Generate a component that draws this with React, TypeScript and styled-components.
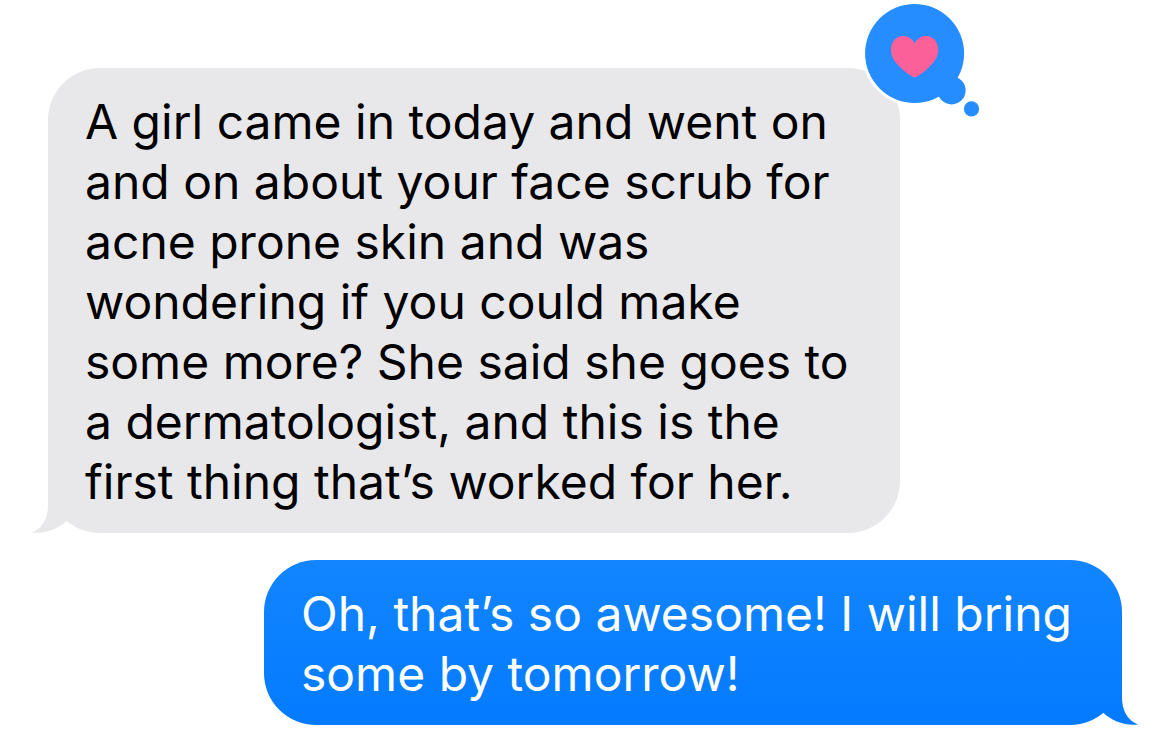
import React from "react";
import styled, { createGlobalStyle } from "styled-components";

type Side = "received" | "sent";

const GlobalStyle = createGlobalStyle`
  *, *::before, *::after { box-sizing: border-box; }
  body { margin: 0; background: #fff; }
`;

const Conversation = styled.main`
  display: flex;
  flex-direction: column;
  gap: 27px;
  padding: 68px 48px 7px;
  font-family: Inter, "Liberation Sans", sans-serif;
`;

const Bubble = styled.article<{ $side: Side }>`
  position: relative;
  padding: 24px 37px 21px;
  border-radius: 52px;
  margin-left: ${(p) => (p.$side === "sent" ? "216px" : "0")};
  margin-right: ${(p) => (p.$side === "sent" ? "0" : "222px")};
  color: ${(p) => (p.$side === "sent" ? "#fff" : "#000")};
  background: ${(p) =>
    p.$side === "sent" ? "linear-gradient(#1285ff, #047bff)" : "#e8e8ea"};
`;

const Message = styled.p`
  position: relative;
  margin: 0;
  font-size: 48px;
  line-height: 60px;
  white-space: nowrap;
`;

const TailShape = styled.svg<{ $side: Side }>`
  position: absolute;
  bottom: 0;
  ${(p) => (p.$side === "sent" ? "right: -17px; transform: scaleX(-1);" : "left: -17px;")}
  width: 72px;
  height: 64px;
`;

const Reaction = styled.svg`
  position: absolute;
  top: -68px;
  right: -84px;
  width: 124px;
  height: 120px;
`;

function Tail({ side }: { side: Side }) {
  return (
    <TailShape $side={side} viewBox="0 0 72 64" aria-hidden="true">
      {/* Continues the lower part of the sent bubble's gradient */}
      <linearGradient id="sentTail" gradientUnits="userSpaceOnUse" x1="0" y1="0" x2="0" y2="64">
        <stop offset="0" stopColor="#097fff" />
        <stop offset="1" stopColor="#047bff" />
      </linearGradient>
      <path
        fill={side === "sent" ? "url(#sentTail)" : "#e8e8ea"}
        d="M17 8V36C17 49 12 59 1 63.5C14 65 27 60 36 51.5L60 30V8Z"
      />
    </TailShape>
  );
}

function HeartReaction() {
  return (
    <Reaction viewBox="0 0 124 120" role="img" aria-label="Loved">
      <circle cx="54.6" cy="53.4" r="52.5" fill="#fff" />
      <g fill="#258dff">
        <circle cx="54.6" cy="53.4" r="49.5" />
        <circle cx="91.6" cy="90.4" r="14" />
        <circle cx="111.5" cy="108.8" r="7.6" />
      </g>
      <path
        fill="#fc6098"
        d="M54.6 77.5C53.2 77.5 46 73 40 67C34.5 61.5 31 56.5 31 50C31 41.5 36.3 36 43 36C48 36 52.3 38.6 54.6 43.4C56.9 38.6 61.2 36 66.2 36C72.9 36 78.2 41.5 78.2 50C78.2 56.5 74.7 61.5 69.2 67C63.2 73 56 77.5 54.6 77.5Z"
      />
    </Reaction>
  );
}

function Lines({ lines }: { lines: string[] }) {
  return (
    <Message>
      {lines.map((line, i) => (
        <React.Fragment key={line}>
          {i > 0 && <br />}
          {line}
        </React.Fragment>
      ))}
    </Message>
  );
}

export default function App() {
  return (
    <>
      <GlobalStyle />
      <Conversation>
        <Bubble $side="received">
          <Tail side="received" />
          <Lines
            lines={[
              "A girl came in today and went on",
              "and on about your face scrub for",
              "acne prone skin and was",
              "wondering if you could make",
              "some more? She said she goes to",
              "a dermatologist, and this is the",
              "first thing that’s worked for her.",
            ]}
          />
          <HeartReaction />
        </Bubble>
        <Bubble $side="sent">
          <Tail side="sent" />
          <Lines lines={["Oh, that’s so awesome! I will bring", "some by tomorrow!"]} />
        </Bubble>
      </Conversation>
    </>
  );
}
